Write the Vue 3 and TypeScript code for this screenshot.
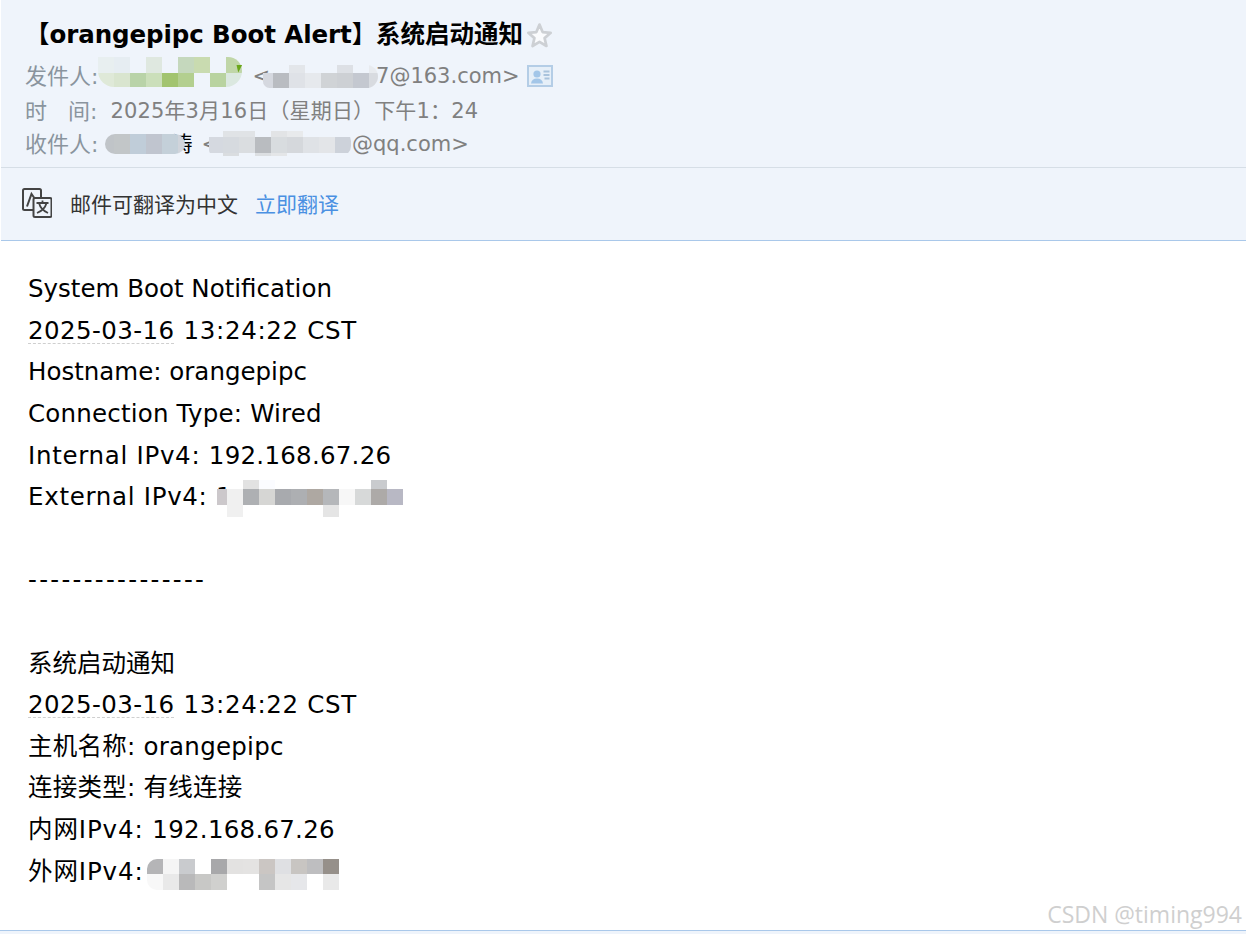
<script setup lang="ts">
interface Row { h: number; cells: (string | null)[] }
interface Mosaic { first: number; rows: Row[] }

const senderName: Mosaic = { first: 16, rows: [
  { h: 16, cells: ['#e8eff0', '#e6edf2', null, '#dfe8e0', null, '#c5d8bd', '#c9dbb0', null, '#c0d6a8'] },
  { h: 14, cells: ['#dfe9d8', '#d9e5cf', '#b9d3a8', '#cbdfba', '#a2c46f', '#b3cf8f', null, '#b9d3a0', '#dbe8e0'] }
] }
const senderMail: Mosaic = { first: 10, rows: [
  { h: 8, cells: [null, null, '#e3e6ea', null, null, '#dde0e5', null, '#e8ebef'] },
  { h: 15, cells: ['#d5d8df', '#b9bcc1', '#dfe2e7', '#e6e9ed', '#d0d3d6', '#cdd0d4', '#c4c8d0', '#d8dbe0'] }
] }
const recvName: Mosaic = { first: 9, rows: [
  { h: 20, cells: ['#c0c4c8', '#c2c6c8', '#c0cdd9', '#c0c5cf', '#c4d0d9', '#d0d4db'] }
] }
const recvMail: Mosaic = { first: 14, rows: [
  { h: 6, cells: [null, '#e0e3e6', '#e0e3e6', null, '#e2e4e6', '#e8eaec', null, null, null] },
  { h: 16, cells: ['#d5d9e0', '#d6dadf', '#dadde0', '#b9bcc0', '#d8dcdf', '#d5d8dc', '#dfe2e6', '#e3e5e8', '#cdd2da'] },
  { h: 3, cells: [null, '#dadde0', null, '#dcdfe2', '#e4e6e8', null, null, null, null] }
] }
const externalIp: Mosaic = { first: 10, rows: [
  { h: 9, cells: [null, null, '#e2e2e2', '#fbfcff', null, null, null, null, null, null, '#c9cbce', null] },
  { h: 16, cells: ['#ccc8cb', '#f0f0f0', '#aeb0b3', '#d6d6d4', '#a8aaae', '#adafb2', '#aea8a2', '#b5b7ba', '#f7f7f7', '#d7d9d9', '#adaaa8', '#b8b8c4'] },
  { h: 12, cells: [null, '#f0f0f0', null, null, null, null, null, '#e5e5e5', null, null, null, null] }
] }
const internalIp: Mosaic = { first: 16, rows: [
  { h: 15, cells: ['#b5b5b7', '#f5f5f5', '#c9cbce', null, '#a8a8aa', '#e3e2e1', '#e4e3e2', '#cbc6c3', '#dfe0e3', '#c8c5c2', '#bebec0', '#96908a'] },
  { h: 16, cells: ['#f8f8f8', '#e9e9e9', '#b9b9ba', '#c8c8c6', '#d0d0ce', null, null, '#c5c5c5', '#e6e6e6', '#e6e7ea', null, '#e9e9e9'] }
] }

function cellStyle(m: Mosaic, row: Row, i: number) {
  return {
    width: (i === 0 ? m.first : 16) + 'px',
    height: row.h + 'px',
    background: row.cells[i] ?? 'transparent'
  }
}
const mosaicList = { senderName, senderMail, recvName, recvMail, externalIp, internalIp }
</script>

<template>
  <div class="mail">
    <header class="head">
      <h1 class="subject"><span class="lat">【orangepipc Boot Alert】</span>系统启动通知<svg class="star" viewBox="0 0 26 25" width="27" height="26"><path d="M13 2.500l3 7.200 7.800.7-5.900 5.100 1.800 7.600L13 19.100l-6.700 4 1.800-7.600-5.900-5.100 7.800-.7z" fill="#fafbfd" stroke="#cdd0d4" stroke-width="2.600" stroke-linejoin="round"/></svg></h1>
      <div class="meta m1">
        <span class="label">发件人:</span>
        <span class="hole w-sn"><span class="mosaic t-sn"><span v-for="(r, ri) in mosaicList.senderName.rows" :key="ri" class="mrow"><i v-for="(c, i) in r.cells" :key="i" :style="cellStyle(mosaicList.senderName, r, i)"></i></span></span><b class="tick"></b></span>
        <span class="lt">&lt;</span>
        <span class="hole w-sm"><span class="mosaic t-sm"><span v-for="(r, ri) in mosaicList.senderMail.rows" :key="ri" class="mrow"><i v-for="(c, i) in r.cells" :key="i" :style="cellStyle(mosaicList.senderMail, r, i)"></i></span></span></span>
        <span>7@163.com&gt;</span>
        <svg class="card" viewBox="0 0 26 22" width="26" height="22">
          <rect x="1" y="1" width="24" height="20" fill="#e6eff8" stroke="#b4cde6" stroke-width="2"/>
          <circle cx="10" cy="9" r="3.600" fill="#a3c6e8"/>
          <path d="M4 18.500c.4-3.400 2.600-5 6-5s5.600 1.600 6 5z" fill="#a3c6e8"/>
          <path d="M16.500 6.500h6M16.500 10h6M17.500 13.500h5" stroke="#a9c3dc" stroke-width="1.800"/>
        </svg>
      </div>
      <div class="meta m2">
        <span class="label">时&nbsp;&nbsp;&nbsp;间:</span>
        <span class="date">2025年3月16日（星期日）下午1：24</span>
      </div>
      <div class="meta m3">
        <span class="label">收件人:</span>
        <span class="hole w-rn"><span class="under">涛</span><span class="mosaic t-rn"><span v-for="(r, ri) in mosaicList.recvName.rows" :key="ri" class="mrow"><i v-for="(c, i) in r.cells" :key="i" :style="cellStyle(mosaicList.recvName, r, i)"></i></span></span></span>
        <span class="lt2">&lt;</span>
        <span class="hole w-rm"><span class="mosaic t-rm"><span v-for="(r, ri) in mosaicList.recvMail.rows" :key="ri" class="mrow"><i v-for="(c, i) in r.cells" :key="i" :style="cellStyle(mosaicList.recvMail, r, i)"></i></span></span></span>
        <span>@qq.com&gt;</span>
      </div>
    </header>

    <div class="translate">
      <svg class="tr-icon" viewBox="0 0 30 30" width="30" height="30" fill="none" stroke="#444" stroke-width="2">
        <path d="M11 22H2.500A1.500 1.500 0 0 1 1 20.500V2.500A1.500 1.500 0 0 1 2.500 1h15A1.500 1.500 0 0 1 19 2.500V10"/>
        <rect x="11.500" y="10" width="18" height="19" rx="1.500" fill="#eff4fb"/>
        <path d="M5 18.500l4.500-12.500 3.200 4.500" stroke-width="2"/>
        <path d="M14.500 15h12M20.500 12.500V15M17 15c1 4 4.500 8 9 10M24.500 15c-1 4-4.500 8-9.500 10" stroke-width="1.800"/>
      </svg>
      <span class="tr-text">邮件可翻译为中文</span>
      <a class="tr-link">立即翻译</a>
    </div>

    <main class="body">
      <div>System Boot Notification</div>
      <div class="num"><span class="dash">2025-03-16</span> <span class="tm">13:24:22 CST</span></div>
      <div>Hostname: orangepipc</div>
      <div class="conn">Connection Type: Wired</div>
      <div class="wide">Internal IPv4: <span class="ip">192.168.67.26</span></div>
      <div class="wide">External IPv4: 1<span class="hole"><span class="mosaic t-ex"><span v-for="(r, ri) in mosaicList.externalIp.rows" :key="ri" class="mrow"><i v-for="(c, i) in r.cells" :key="i" :style="cellStyle(mosaicList.externalIp, r, i)"></i></span></span></span></div>
      <div class="blank"></div>
      <div class="dashes">----------------</div>
      <div class="blank"></div>
      <div>系统启动通知</div>
      <div class="num"><span class="dash">2025-03-16</span> <span class="tm">13:24:22 CST</span></div>
      <div class="zh">主机名称: orangepipc</div>
      <div class="zh">连接类型: 有线连接</div>
      <div class="wideZh">内网IPv4: <span class="ip">192.168.67.26</span></div>
      <div class="wideZh">外网IPv4:<span class="hole"><span class="mosaic t-in"><span v-for="(r, ri) in mosaicList.internalIp.rows" :key="ri" class="mrow"><i v-for="(c, i) in r.cells" :key="i" :style="cellStyle(mosaicList.internalIp, r, i)"></i></span></span></span></div>
    </main>
    <div class="foot"></div>
    <div class="watermark">CSDN @timing994</div>
  </div>
</template>

<style>
html, body { margin: 0; background: #fff; overflow: hidden; }
</style>

<style scoped>
.mail {
  position: relative;
  width: 1246px;
  height: 934px;
  overflow: hidden;
  font-family: "DejaVu Sans", "Noto Sans CJK SC", sans-serif;
  color: #000;
  background: #fff;
}
.head {
  box-sizing: border-box;
  height: 168px;
  padding: 15px 0 0 24px;
  margin-left: 1px;
  background: #eff4fb;
  border-bottom: 1px solid #d6dee6;
}
.subject {
  display: flex;
  align-items: center;
  margin: 0;
  height: 38px;
  font-size: 24.500px;
  font-weight: 700;
  line-height: 38px;
  white-space: nowrap;
  padding-top: 1px;
}
.lat { letter-spacing: -0.08px; }
.star { margin-left: 3px; }
.meta {
  box-sizing: border-box;
  display: flex;
  align-items: center;
  height: 34px;
  font-size: 21px;
  color: #808080;
  white-space: nowrap;
}
.m1 { margin-top: 4px; padding-top: 2px; }
.m3 { padding-top: 2px; }
.m1 .label, .m3 .label { padding-bottom: 4px; }
.label { color: #8a949e; font-size: 22px; }
.date { margin-left: 13px; letter-spacing: 0.15px; }
.hole { position: relative; display: inline-block; height: 1em; }
.mosaic { position: absolute; display: block; }
.mrow { display: flex; }
.mrow i { display: block; flex: none; }
.w-sn { width: 154px; }
.t-sn { left: 0; top: -9px; border-radius: 0 14px 16px 16px; overflow: hidden; }
.tick { position: absolute; left: 138px; top: -1px; width: 6px; height: 8px; background: #6aa61a; clip-path: polygon(0 0, 100% 0, 30% 100%); }
.w-sm { width: 106px; }
.t-sm { left: -7px; top: -1px; width: 115px; border-radius: 10px 14px 14px 8px; overflow: hidden; }
.card { margin-left: 7px; }
.w-rn { width: 103px; }
.under { position: absolute; left: 73px; top: -7px; font-size: 21px; color: #000; }
.t-rn { left: 7px; top: 0; width: 80px; border-radius: 10px; overflow: hidden; }
.w-rm { width: 133px; }
.t-rm { left: -10px; top: -3px; border-radius: 0 10px 10px 6px; overflow: hidden; }
.translate {
  box-sizing: border-box;
  display: flex;
  align-items: center;
  height: 73px;
  margin-left: 1px;
  padding: 0 0 2px 21px;
  background: #eff4fb;
  border-bottom: 1px solid #a9c8ea;
  font-size: 21px;
  font-family: "Noto Sans CJK SC", sans-serif;
  color: #333;
}
.tr-icon { flex: none; }
.tr-text { margin-left: 18px; }
.tr-link { margin-left: 17px; color: #4a90e2; }
.body {
  padding: 27px 0 0 28px;
  font-size: 24.500px;
  line-height: 41.620px;
  white-space: nowrap;
}
.blank { height: 41.620px; }
.num { letter-spacing: 0.4px; }
.tm { letter-spacing: 0.65px; margin-left: 1px; }
.wide { letter-spacing: 0.7px; }
.wideZh { letter-spacing: 0.9px; }
.ip { letter-spacing: 0.25px; }
.zh { letter-spacing: 0.25px; }
.conn { letter-spacing: 0.2px; }
.dashes { letter-spacing: 2.300px; }
.dash { display: inline-block; line-height: 25px; border-bottom: 1px dashed #cfcfcf; }
.t-ex { left: -15px; top: -1px; border-radius: 8px; overflow: hidden; }
.t-in { left: 3px; top: 4px; border-radius: 10px 0 0 10px; overflow: hidden; }
.foot {
  box-sizing: border-box;
  position: absolute;
  left: 0;
  right: 0;
  top: 930px;
  height: 4px;
  background: #eff4fb;
  border-top: 1px solid #a9c8ea;
}
.watermark {
  position: absolute;
  right: 4px;
  top: 899px;
  font-family: "Open Sans", sans-serif;
  font-size: 23px;
  line-height: 30px;
  color: #cfcfcf;
}
</style>
